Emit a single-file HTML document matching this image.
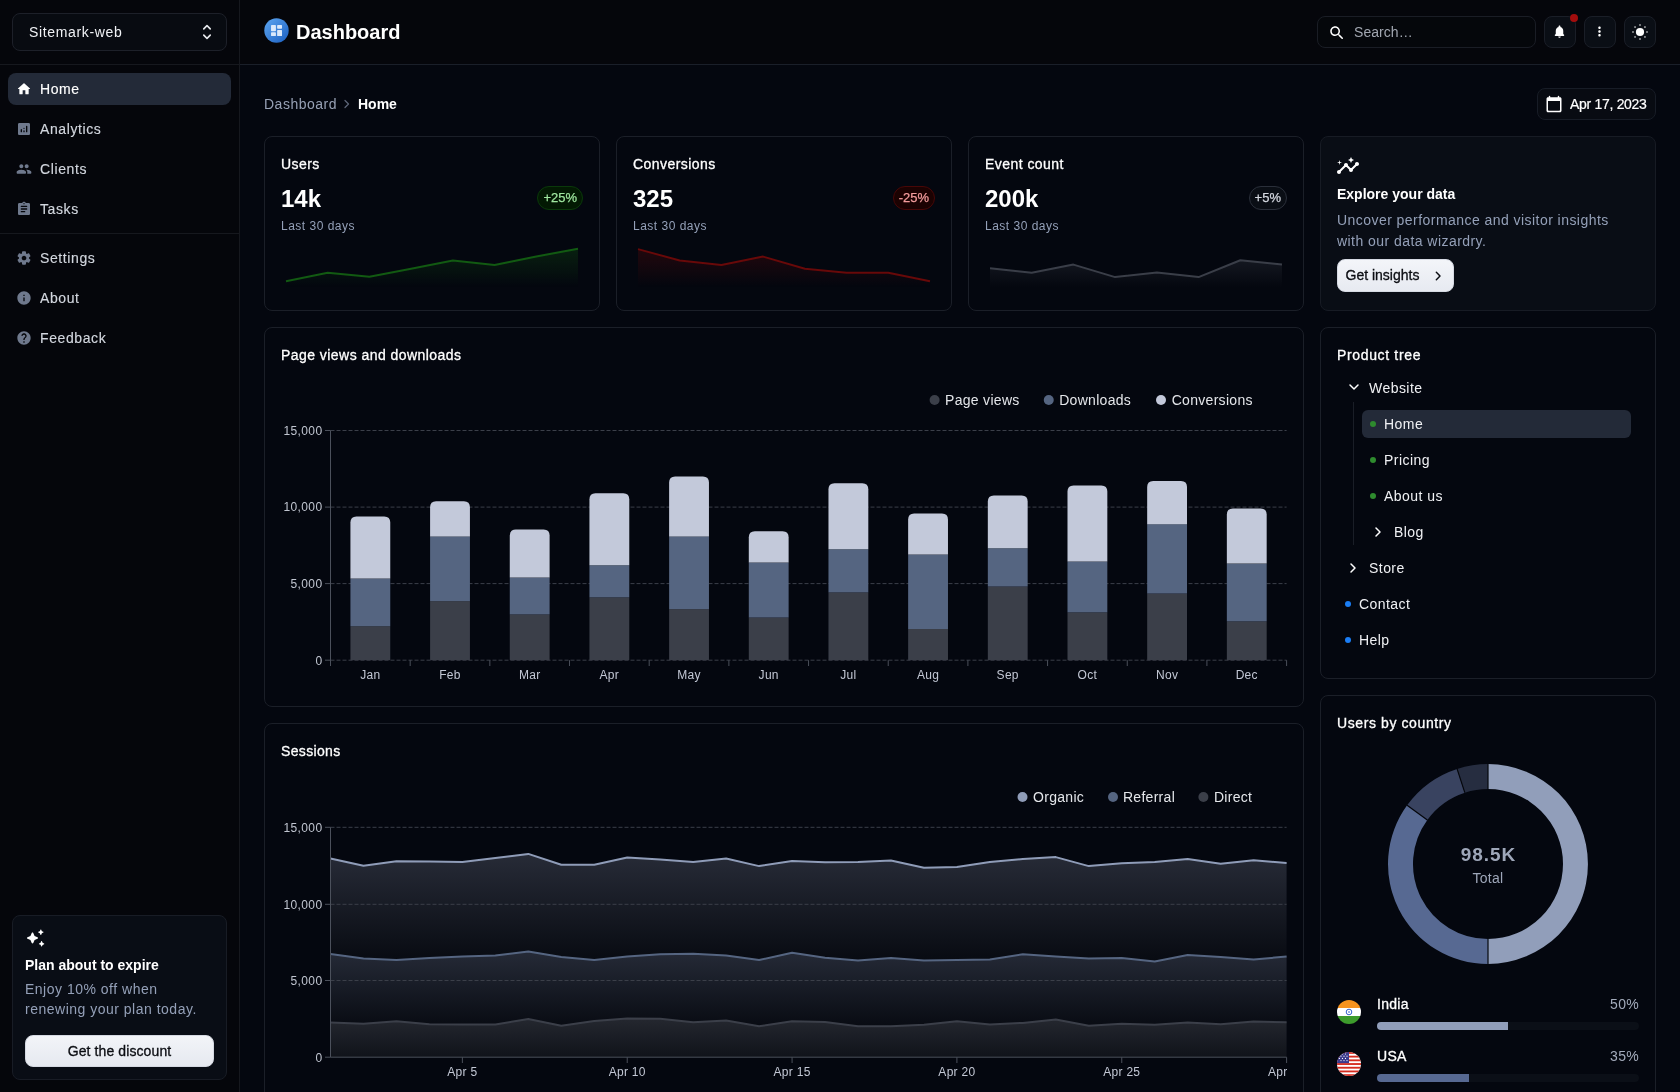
<!DOCTYPE html>
<html><head><meta charset="utf-8">
<style>
*{box-sizing:border-box;margin:0;padding:0}
html,body{width:1680px;height:1092px;overflow:hidden;background:#04070f;font-family:"Liberation Sans",sans-serif;color:#fff}
.abs{position:absolute}
#root{position:absolute;left:0;top:0;width:1680px;height:1092px;will-change:transform}
svg{display:block}
#side{position:absolute;left:0;top:0;width:240px;height:1092px;background:#05060b;border-right:1px solid #16181e}
#hdr{position:absolute;left:240px;top:0;width:1440px;height:65px;background:#05060b;border-bottom:1px solid #1a1f29}
#sideline{position:absolute;left:0;top:64px;width:239px;height:1px;background:#16181e}
.sel{position:absolute;left:12px;top:13px;width:215px;height:38px;border:1px solid #1d2029;border-radius:8px;background:#080b11}
.nav{position:absolute;left:8px;width:223px;height:32px;border-radius:8px}
.nav .ic{position:absolute;left:8px;top:8px;width:16px;height:16px;fill:#6f798d}
.nav .tx{position:absolute;left:32px;top:0;line-height:32px;font-size:14px;color:#d2d6de;letter-spacing:0.6px;-webkit-text-stroke:0.15px currentColor}
.nav.on{background:#232a38}
.nav.on .ic{fill:#fff}
.nav.on .tx{color:#fff}
.card{position:absolute;border:1px solid #1b1f28;border-radius:8px;background:#04070f}
.t14{font-size:14px;letter-spacing:0.3px}
.muted{color:#94a0b8}
.med{-webkit-text-stroke:0.3px currentColor}
.chip{position:absolute;right:16px;top:49px;height:24px;border:1px solid;border-radius:12px;font-size:13px;line-height:22px;padding:0 5px;letter-spacing:0px;-webkit-text-stroke:0.25px currentColor}
.chip.up{background:#031903;border-color:#0a390a;color:#9fe79f}
.chip.down{background:#1b0202;border-color:#480707;color:#f39c9c}
.chip.neu{background:#0a0e15;border-color:#2a2f3a;color:#d4d8e0}
.tdot{position:absolute;width:6px;height:6px;border-radius:50%}
.tdot.g{background:#2e8b2e}.tdot.b{background:#1b7ef5}
</style></head><body>
<div id="root"><div id="side">
  <div class="sel"><div class="abs t14" style="left:16px;top:0;line-height:37px;color:#f0f2f5;letter-spacing:0.65px">Sitemark-web</div>
    <svg class="abs" style="left:184px;top:8px" width="20" height="20" viewBox="0 0 24 24" fill="#e8eaee"><path d="M12 5.83 15.17 9c.39.39 1.02.39 1.41 0 .39-.39.39-1.02 0-1.41L12.7 3.7a.9959.9959 0 0 0-1.41 0L7.41 7.59c-.39.39-.39 1.02 0 1.41.39.39 1.02.39 1.41 0L12 5.83zm0 12.34L8.83 15a.9959.9959 0 0 0-1.41 0c-.39.39-.39 1.02 0 1.41l3.88 3.89c.39.39 1.02.39 1.41 0l3.88-3.88c.39-.39.39-1.02 0-1.41a.9959.9959 0 0 0-1.41 0L12 18.17z"/></svg>
  </div>
  <div class="nav on" style="top:73px"><svg class="ic" viewBox="0 0 24 24"><path d="M10 19v-5h4v5c0 .55.45 1 1 1h3c.55 0 1-.45 1-1v-7h1.7c.46 0 .68-.57.33-.87L12.67 3.6c-.38-.34-.96-.34-1.34 0l-8.36 7.53c-.34.3-.13.87.33.87H5v7c0 .55.45 1 1 1h3c.55 0 1-.45 1-1z"/></svg><div class="tx">Home</div></div>
  <div class="nav" style="top:113px"><svg class="ic" viewBox="0 0 24 24"><path d="M19 3H5c-1.1 0-2 .9-2 2v14c0 1.1.9 2 2 2h14c1.1 0 2-.9 2-2V5c0-1.1-.9-2-2-2zM8 17c-.55 0-1-.45-1-1v-3c0-.55.45-1 1-1s1 .45 1 1v3c0 .55-.45 1-1 1zm4 0c-.55 0-1-.45-1-1v-1c0-.55.45-1 1-1s1 .45 1 1v1c0 .55-.45 1-1 1zm0-5c-.55 0-1-.45-1-1s.45-1 1-1 1 .45 1 1-.45 1-1 1zm4 5c-.55 0-1-.45-1-1V8c0-.55.45-1 1-1s1 .45 1 1v8c0 .55-.45 1-1 1z"/></svg><div class="tx">Analytics</div></div>
  <div class="nav" style="top:153px"><svg class="ic" viewBox="0 0 24 24"><path d="M16 11c1.66 0 2.99-1.34 2.99-3S17.66 5 16 5s-3 1.34-3 3 1.34 3 3 3zm-8 0c1.66 0 2.99-1.34 2.99-3S9.66 5 8 5 5 6.34 5 8s1.34 3 3 3zm0 2c-2.33 0-7 1.17-7 3.5V18c0 .55.45 1 1 1h12c.55 0 1-.45 1-1v-1.5c0-2.33-4.67-3.5-7-3.5zm8 0c-.29 0-.62.02-.97.05.02.01.03.03.04.04 1.14.83 1.93 1.94 1.93 3.41V18c0 .35-.07.69-.18 1H22c.55 0 1-.45 1-1v-1.5c0-2.33-4.67-3.5-7-3.5z"/></svg><div class="tx">Clients</div></div>
  <div class="nav" style="top:193px"><svg class="ic" viewBox="0 0 24 24"><path d="M19 3h-4.18C14.4 1.84 13.3 1 12 1s-2.4.84-2.82 2H5c-1.1 0-2 .9-2 2v14c0 1.1.9 2 2 2h14c1.1 0 2-.9 2-2V5c0-1.1-.9-2-2-2zm-7 0c.55 0 1 .45 1 1s-.45 1-1 1-1-.45-1-1 .45-1 1-1zm1 14H8c-.55 0-1-.45-1-1s.45-1 1-1h5c.55 0 1 .45 1 1s-.45 1-1 1zm3-4H8c-.55 0-1-.45-1-1s.45-1 1-1h8c.55 0 1 .45 1 1s-.45 1-1 1zm0-4H8c-.55 0-1-.45-1-1s.45-1 1-1h8c.55 0 1 .45 1 1s-.45 1-1 1z"/></svg><div class="tx">Tasks</div></div>
  <div class="abs" style="left:0;top:233px;width:239px;height:1px;background:#16181e"></div>
  <div class="nav" style="top:242px"><svg class="ic" viewBox="0 0 24 24"><path d="M19.5 12c0-.23-.01-.45-.03-.68l1.86-1.41c.4-.3.51-.86.26-1.3l-1.87-3.23c-.25-.44-.79-.62-1.25-.42l-2.15.91c-.37-.26-.76-.49-1.170-.68l-.29-2.31c-.06-.5-.49-.88-.99-.88h-3.73c-.51 0-.94.38-1 .88l-.29 2.31c-.41.19-.8.42-1.17.68l-2.15-.91c-.46-.2-1-.02-1.25.42L2.41 8.62c-.25.44-.14.99.26 1.3l1.86 1.41c-.02.22-.03.44-.03.67s.01.45.03.68l-1.86 1.41c-.4.3-.51.86-.26 1.3l1.87 3.23c.25.44.79.62 1.25.42l2.15-.91c.37.26.76.49 1.17.68l.29 2.31c.06.5.49.88.99.88h3.73c.5 0 .93-.38.99-.88l.29-2.31c.41-.19.8-.42 1.17-.68l2.15.91c.46.2 1 .02 1.25-.42l1.87-3.23c.25-.44.14-.99-.26-1.3l-1.86-1.41c.03-.23.04-.45.04-.68zm-7.46 3.5c-1.93 0-3.5-1.57-3.5-3.5s1.570-3.5 3.5-3.5 3.5 1.57 3.5 3.5-1.57 3.5-3.5 3.5z"/></svg><div class="tx">Settings</div></div>
  <div class="nav" style="top:282px"><svg class="ic" viewBox="0 0 24 24"><path d="M12 2C6.48 2 2 6.48 2 12s4.48 10 10 10 10-4.48 10-10S17.52 2 12 2zm0 15c-.55 0-1-.45-1-1v-4c0-.55.45-1 1-1s1 .45 1 1v4c0 .55-.45 1-1 1zm1-8h-2V7h2v2z"/></svg><div class="tx">About</div></div>
  <div class="nav" style="top:322px"><svg class="ic" viewBox="0 0 24 24"><path d="M12 2C6.48 2 2 6.48 2 12s4.48 10 10 10 10-4.48 10-10S17.52 2 12 2zm1 17h-2v-2h2v2zm2.07-7.75-.9.92c-.5.51-.86.97-1.04 1.69-.08.32-.13.68-.13 1.14h-2v-.5c0-.46.08-.9.22-1.31.2-.58.53-1.1.95-1.52l1.24-1.26c.46-.44.68-1.1.55-1.8-.13-.72-.69-1.33-1.39-1.53-1.110-.31-2.14.32-2.47 1.27-.12.37-.43.65-.82.65h-.3C8.4 9 8 8.44 8.16 7.88c.43-1.47 1.68-2.59 3.23-2.83 1.52-.24 2.97.55 3.87 1.8 1.18 1.63.83 3.38-.19 4.4z"/></svg><div class="tx">Feedback</div></div>
  <div class="abs" style="left:12px;top:915px;width:215px;height:165px;border:1px solid #181c25;border-radius:8px;background:#090d15">
    <svg class="abs" style="left:12px;top:12px" width="20" height="20" viewBox="0 0 24 24" fill="#fff"><path d="M19.46 8l.79-1.75L22 5.46c.39-.18.39-.73 0-.91l-1.75-.79L19.46 2c-.18-.39-.73-.39-.91 0l-.79 1.750-1.76.79c-.39.18-.39.73 0 .91l1.75.79.79 1.76c.18.39.74.39.92 0zM11.5 9.5 9.910 6c-.35-.78-1.47-.78-1.82 0L6.5 9.5 3 11.09c-.78.36-.78 1.47 0 1.82l3.5 1.59L8.09 18c.36.78 1.47.78 1.82 0l1.59-3.5 3.5-1.59c.78-.36.78-1.47 0-1.82L11.5 9.5zm7.95 6.5-.79 1.75-1.76.79c-.39.18-.39.73 0 .91l1.75.79.79 1.76c.18.39.73.39.91 0l.79-1.75 1.76-.79c.39-.18.39-.73 0-.91l-1.75-.79-.79-1.76c-.18-.39-.74-.39-.92 0z"/></svg>
    <div class="abs" style="left:12px;top:39px;font-size:14px;font-weight:700;line-height:20px">Plan about to expire</div>
    <div class="abs t14 muted" style="left:12px;top:63px;line-height:20px;width:200px;letter-spacing:0.5px">Enjoy 10% off when<br>renewing your plan today.</div>
    <div class="abs" style="left:12px;top:119px;width:189px;height:32px;border-radius:8px;background:linear-gradient(#f2f4f8,#e6e9f0);border:1px solid #d5d9e2;color:#0b0d12;font-size:14px;line-height:30px;text-align:center;letter-spacing:0.1px;-webkit-text-stroke:0.3px #0b0d12">Get the discount</div>
  </div>
</div>
<div id="sideline"></div>
<div id="hdr">
  <svg class="abs" style="left:24px;top:18px" width="25" height="25" viewBox="0 0 25 25">
    <defs><linearGradient id="lg" x1="0" y1="0" x2="1" y2="1"><stop offset="0" stop-color="#5ea7f2"/><stop offset="1" stop-color="#1a5ec0"/></linearGradient></defs>
    <circle cx="12.5" cy="12.5" r="12.2" fill="url(#lg)"/>
    <g fill="#dbe9fb" transform="translate(5.2,5.2) scale(0.61)"><path d="M4 13h6c.55 0 1-.45 1-1V4c0-.55-.45-1-1-1H4c-.55 0-1 .45-1 1v8c0 .55.45 1 1 1zm0 8h6c.55 0 1-.45 1-1v-4c0-.55-.45-1-1-1H4c-.55 0-1 .45-1 1v4c0 .55.45 1 1 1zm10 0h6c.55 0 1-.45 1-1v-8c0-.55-.45-1-1-1h-6c-.55 0-1 .45-1 1v8c0 .55.45 1 1 1zM13 4v4c0 .55.45 1 1 1h6c.55 0 1-.45 1-1V4c0-.55-.45-1-1-1h-6c-.55 0-1 .45-1 1z"/></g>
  </svg>
  <div class="abs" style="left:56px;top:19px;font-size:20px;font-weight:700;line-height:26px;color:#fff">Dashboard</div>
  <div class="abs" style="left:1077px;top:16px;width:219px;height:32px;border:1px solid #1a1d25;border-radius:8px;background:#05070b">
    <svg class="abs" style="left:10px;top:7px" width="18" height="18" viewBox="0 0 24 24" fill="#fff"><path d="M15.5 14h-.79l-.28-.27C15.41 12.59 16 11.11 16 9.5 16 5.910 13.09 3 9.5 3S3 5.91 3 9.5 5.91 16 9.5 16c1.61 0 3.09-.59 4.23-1.57l.27.28v.79l4.25 4.25c.41.41 1.08.41 1.49 0 .41-.41.41-1.08 0-1.49L15.5 14zm-6 0C7.01 14 5 11.99 5 9.5S7.01 5 9.5 5 14 7.01 14 9.5 11.99 14 9.5 14z"/></svg>
    <div class="abs t14" style="left:36px;top:0;line-height:30px;color:#a2a7b1;letter-spacing:0.05px">Search…</div>
  </div>
  <div class="abs" style="left:1304px;top:16px;width:32px;height:32px;border:1px solid #1a1e27;border-radius:8px;background:#0a0e15">
    <svg class="abs" style="left:7px;top:7px" width="15" height="15" viewBox="0 0 24 24" fill="#fff"><path d="M12 22c1.1 0 2-.9 2-2h-4c0 1.1.89 2 2 2zm6-6v-5c0-3.07-1.64-5.64-4.5-6.32V4c0-.83-.67-1.5-1.5-1.5s-1.5.67-1.5 1.5v.68C7.63 5.36 6 7.92 6 11v5l-1.29 1.29c-.63.63-.19 1.71.7 1.71h13.17c.89 0 1.34-1.08.71-1.71L18 16z"/></svg>
    <div class="abs" style="left:25px;top:-3px;width:8px;height:8px;border-radius:50%;background:#a30d0d"></div>
  </div>
  <div class="abs" style="left:1344px;top:16px;width:32px;height:32px;border:1px solid #1a1e27;border-radius:8px;background:#0a0e15">
    <svg class="abs" style="left:7px;top:7px" width="15" height="15" viewBox="0 0 24 24" fill="#fff"><path d="M12 8c1.1 0 2-.9 2-2s-.9-2-2-2-2 .9-2 2 .9 2 2 2zm0 2c-1.1 0-2 .9-2 2s.9 2 2 2 2-.9 2-2-.9-2-2-2zm0 6c-1.1 0-2 .9-2 2s.9 2 2 2 2-.9 2-2-.9-2-2-2z"/></svg>
  </div>
  <div class="abs" style="left:1384px;top:16px;width:32px;height:32px;border:1px solid #1a1e27;border-radius:8px;background:#0a0e15">
    <svg class="abs" style="left:7px;top:6.5px" width="16" height="16" viewBox="0 0 16 16" fill="#fff"><circle cx="8" cy="8" r="4.1"/><rect x="7.35" y="0.35" width="1.3" height="1.3"/><rect x="12.30" y="2.40" width="1.3" height="1.3"/><rect x="14.35" y="7.35" width="1.3" height="1.3"/><rect x="12.30" y="12.30" width="1.3" height="1.3"/><rect x="7.35" y="14.35" width="1.3" height="1.3"/><rect x="2.40" y="12.30" width="1.3" height="1.3"/><rect x="0.35" y="7.35" width="1.3" height="1.3"/><rect x="2.40" y="2.40" width="1.3" height="1.3"/></svg>
  </div>
</div>
<div class="abs t14" style="left:264px;top:94px;line-height:20px;color:#97a1b5;letter-spacing:0.5px">Dashboard</div>
<svg class="abs" style="left:341px;top:96px" width="12" height="16" viewBox="0 0 12 16"><path d="M4 4.5 7.5 8 4 11.5" fill="none" stroke="#5d6577" stroke-width="1.3" stroke-linecap="round" stroke-linejoin="round"/></svg>
<div class="abs" style="left:358px;top:94px;font-size:14px;font-weight:700;line-height:20px;color:#fff">Home</div>
<div class="abs" style="left:1537px;top:88px;width:119px;height:32px;border:1px solid #171c26;border-radius:8px;background:#080b12">
  <svg class="abs" style="left:7px;top:6px" width="18" height="18" viewBox="0 0 24 24" fill="#fff"><path d="M20 3h-1V2c0-.55-.45-1-1-1s-1 .45-1 1v1H7V2c0-.55-.45-1-1-1s-1 .45-1 1v1H4c-1.1 0-2 .9-2 2v16c0 1.1.9 2 2 2h16c1.1 0 2-.9 2-2V5c0-1.1-.9-2-2-2zm-1 18H5c-.55 0-1-.45-1-1V8h16v12c0 .55-.45 1-1 1z"/></svg>
  <div class="abs" style="left:32px;top:0;line-height:30px;font-size:14px;color:#fff;letter-spacing:-0.3px;-webkit-text-stroke:0.2px #fff">Apr 17, 2023</div>
</div>
<div class="card" style="left:264px;top:136px;width:336px;height:175px">
  <div class="abs med" style="left:16px;top:17px;font-size:14px;line-height:20px;color:#fff;letter-spacing:0.45px">Users</div>
  <div class="abs" style="left:16px;top:47px;font-size:24px;font-weight:700;line-height:30px;color:#fff">14k</div>
  <div class="abs muted" style="left:16px;top:81px;font-size:12px;line-height:16px;letter-spacing:0.5px">Last 30 days</div>
  <div class="chip up">+25%</div>
  <svg class="abs" style="left:0;top:0" width="334" height="173"><defs><linearGradient id="g1" x1="0" y1="0" x2="0" y2="1"><stop offset="0" stop-color="#125a12" stop-opacity="0.3"/><stop offset="1" stop-color="#125a12" stop-opacity="0"/></linearGradient></defs>
  <path d="M21.0,144.2 L21.0,144.2 L62.7,135.7 L104.4,139.8 L146.1,131.8 L187.9,123.5 L229.6,128.1 L271.3,119.6 L313.0,111.8 L313.0,150 L21.0,150 Z" fill="url(#g1)"/><polyline points="21.0,144.2 62.7,135.7 104.4,139.8 146.1,131.8 187.9,123.5 229.6,128.1 271.3,119.6 313.0,111.8" fill="none" stroke="#125a12" stroke-width="2" stroke-linejoin="round"/></svg>
</div>
<div class="card" style="left:616px;top:136px;width:336px;height:175px">
  <div class="abs med" style="left:16px;top:17px;font-size:14px;line-height:20px;color:#fff;letter-spacing:0.45px">Conversions</div>
  <div class="abs" style="left:16px;top:47px;font-size:24px;font-weight:700;line-height:30px;color:#fff">325</div>
  <div class="abs muted" style="left:16px;top:81px;font-size:12px;line-height:16px;letter-spacing:0.5px">Last 30 days</div>
  <div class="chip down">-25%</div>
  <svg class="abs" style="left:0;top:0" width="334" height="173"><defs><linearGradient id="g2" x1="0" y1="0" x2="0" y2="1"><stop offset="0" stop-color="#680909" stop-opacity="0.3"/><stop offset="1" stop-color="#680909" stop-opacity="0"/></linearGradient></defs>
  <path d="M21.0,112.1 L21.0,112.1 L62.7,123.5 L104.4,127.9 L146.1,119.6 L187.9,131.8 L229.6,135.7 L271.3,135.7 L313.0,144.2 L313.0,150 L21.0,150 Z" fill="url(#g2)"/><polyline points="21.0,112.1 62.7,123.5 104.4,127.9 146.1,119.6 187.9,131.8 229.6,135.7 271.3,135.7 313.0,144.2" fill="none" stroke="#680909" stroke-width="2" stroke-linejoin="round"/></svg>
</div>
<div class="card" style="left:968px;top:136px;width:336px;height:175px">
  <div class="abs med" style="left:16px;top:17px;font-size:14px;line-height:20px;color:#fff;letter-spacing:0.45px">Event count</div>
  <div class="abs" style="left:16px;top:47px;font-size:24px;font-weight:700;line-height:30px;color:#fff">200k</div>
  <div class="abs muted" style="left:16px;top:81px;font-size:12px;line-height:16px;letter-spacing:0.5px">Last 30 days</div>
  <div class="chip neu">+5%</div>
  <svg class="abs" style="left:0;top:0" width="334" height="173"><defs><linearGradient id="g3" x1="0" y1="0" x2="0" y2="1"><stop offset="0" stop-color="#3a3e48" stop-opacity="0.3"/><stop offset="1" stop-color="#3a3e48" stop-opacity="0"/></linearGradient></defs>
  <path d="M21.0,131.3 L21.0,131.3 L62.7,135.8 L104.4,127.6 L146.1,140.1 L187.9,135.6 L229.6,140.1 L271.3,123.3 L313.0,127.6 L313.0,150 L21.0,150 Z" fill="url(#g3)"/><polyline points="21.0,131.3 62.7,135.8 104.4,127.6 146.1,140.1 187.9,135.6 229.6,140.1 271.3,123.3 313.0,127.6" fill="none" stroke="#3a3e48" stroke-width="2" stroke-linejoin="round"/></svg>
</div>
<div class="card" style="left:1320px;top:136px;width:336px;height:175px;background:#090d15;border-color:#171b24">
  <svg class="abs" style="left:16px;top:19px" width="22" height="18" viewBox="1 2 22 18" fill="#fff"><path d="M21 8c-1.45 0-2.26 1.44-1.93 2.51l-3.55 3.56c-.3-.09-.74-.09-1.04 0l-2.55-2.55C12.27 10.45 11.46 9 10 9c-1.45 0-2.27 1.44-1.930 2.52l-4.56 4.55C2.44 15.74 1 16.550 1 18c0 1.1.9 2 2 2 1.45 0 2.26-1.44 1.93-2.51l4.55-4.56c.3.09.74.09 1.04 0l2.55 2.55C12.73 16.55 13.54 18 15 18c1.45 0 2.27-1.44 1.93-2.52l3.56-3.55c1.07.33 2.51-.48 2.51-1.93 0-1.1-.9-2-2-2z"/><path d="m15 9 .94-2.07L18 6l-2.06-.93L15 3l-.92 2.07L12 6l2.08.93zM3.5 11 4 9l2-.5L4 8l-.5-2L3 8l-2 .5L3 9z"/></svg>
  <div class="abs" style="left:16px;top:47px;font-size:14px;font-weight:700;line-height:20px">Explore your data</div>
  <div class="abs t14 muted" style="left:16px;top:73px;line-height:21px;width:310px;letter-spacing:0.45px">Uncover performance and visitor insights<br>with our data wizardry.</div>
  <div class="abs" style="left:16px;top:122px;width:117px;height:33px;border-radius:8px;background:linear-gradient(#f3f5f9,#e7eaf1);border:1px solid #d6dae3;color:#0b0d12;font-size:14px;line-height:31px;letter-spacing:0px;-webkit-text-stroke:0.3px #0b0d12">
    <span class="abs" style="left:7.5px;top:0">Get insights</span>
    <svg class="abs" style="left:92px;top:8px" width="16" height="16" viewBox="0 0 24 24"><path d="M9.5 6.5 15 12l-5.5 5.5" fill="none" stroke="#0b0d12" stroke-width="2.2" stroke-linecap="round" stroke-linejoin="round"/></svg>
  </div>
</div>
<div class="card" style="left:264px;top:327px;width:1040px;height:380px">
  <div class="abs t14 med" style="left:16px;top:17px;line-height:20px;color:#fff;letter-spacing:0.45px">Page views and downloads</div>
</div>
<div class="card" style="left:264px;top:723px;width:1040px;height:400px">
  <div class="abs t14 med" style="left:16px;top:17px;line-height:20px;color:#fff;letter-spacing:0.35px">Sessions</div>
</div>
<div class="card" style="left:1320px;top:327px;width:336px;height:352px">
  <div class="abs t14 med" style="left:16px;top:17px;line-height:20px;color:#fff;letter-spacing:0.65px">Product tree</div>
  <svg class="abs" style="left:25px;top:51px" width="16" height="16" viewBox="0 0 16 16"><path d="M4 6 8 10 12 6" fill="none" stroke="#fff" stroke-width="1.5" stroke-linecap="round" stroke-linejoin="round"/></svg>
  <div class="abs t14" style="left:48px;top:50px;line-height:20px;color:#f0f1f4;letter-spacing:0.45px">Website</div>
  <div class="abs" style="left:32px;top:74px;width:1px;height:143px;background:#1a1e27"></div>
  <div class="abs" style="left:41px;top:82px;width:269px;height:28px;border-radius:6px;background:#232a38"></div>
  <div class="tdot g" style="left:49px;top:93px"></div><div class="abs t14" style="left:63px;top:86px;line-height:20px;color:#f0f1f4;letter-spacing:0.45px">Home</div>
  <div class="tdot g" style="left:49px;top:129px"></div><div class="abs t14" style="left:63px;top:122px;line-height:20px;color:#f0f1f4;letter-spacing:0.45px">Pricing</div>
  <div class="tdot g" style="left:49px;top:165px"></div><div class="abs t14" style="left:63px;top:158px;line-height:20px;color:#f0f1f4;letter-spacing:0.45px">About us</div>
  <svg class="abs" style="left:49px;top:196px" width="16" height="16" viewBox="0 0 16 16"><path d="M6 4 10 8 6 12" fill="none" stroke="#fff" stroke-width="1.5" stroke-linecap="round" stroke-linejoin="round"/></svg>
  <div class="abs t14" style="left:73px;top:194px;line-height:20px;color:#f0f1f4;letter-spacing:0.45px">Blog</div>
  <svg class="abs" style="left:24px;top:232px" width="16" height="16" viewBox="0 0 16 16"><path d="M6 4 10 8 6 12" fill="none" stroke="#fff" stroke-width="1.5" stroke-linecap="round" stroke-linejoin="round"/></svg>
  <div class="abs t14" style="left:48px;top:230px;line-height:20px;color:#f0f1f4;letter-spacing:0.45px">Store</div>
  <div class="tdot b" style="left:24px;top:273px"></div><div class="abs t14" style="left:38px;top:266px;line-height:20px;color:#f0f1f4;letter-spacing:0.45px">Contact</div>
  <div class="tdot b" style="left:24px;top:309px"></div><div class="abs t14" style="left:38px;top:302px;line-height:20px;color:#f0f1f4;letter-spacing:0.45px">Help</div>
</div>
<div class="card" style="left:1320px;top:695px;width:336px;height:420px">
  <div class="abs t14 med" style="left:16px;top:17px;line-height:20px;color:#fff;letter-spacing:0.6px">Users by country</div>
  <svg class="abs" style="left:16px;top:304px" width="24" height="24" viewBox="0 0 24 24"><defs><clipPath id="cin"><circle cx="12" cy="12" r="12"/></clipPath></defs><g clip-path="url(#cin)"><rect width="24" height="8" fill="#f7931e"/><rect y="8" width="24" height="8" fill="#fff"/><rect y="16" width="24" height="8" fill="#3d9b2c"/><circle cx="12" cy="12" r="2.8" fill="none" stroke="#1d4ec4" stroke-width="0.9"/><circle cx="12" cy="12" r="0.8" fill="#1d4ec4"/></g></svg>
  <div class="abs t14 med" style="left:56px;top:298px;line-height:20px;color:#fff">India</div>
  <div class="abs t14 muted" style="right:16px;top:298px;line-height:20px;color:#a3abbb">50%</div>
  <div class="abs" style="left:56px;top:326px;width:262px;height:8px;border-radius:4px;background:#0b0f17;overflow:hidden"><div style="width:50%;height:8px;background:#919eba"></div></div>
  <svg class="abs" style="left:16px;top:356px" width="24" height="24" viewBox="0 0 24 24"><defs><clipPath id="cus"><circle cx="12" cy="12" r="12"/></clipPath></defs><g clip-path="url(#cus)"><rect width="24" height="24" fill="#fff"/><g fill="#d52b1e"><rect y="0" width="24" height="1.85"/><rect y="3.7" width="24" height="1.85"/><rect y="7.4" width="24" height="1.85"/><rect y="11.1" width="24" height="1.85"/><rect y="14.8" width="24" height="1.85"/><rect y="18.5" width="24" height="1.85"/><rect y="22.2" width="24" height="1.85"/></g><rect width="12" height="11.1" fill="#3c3b8e"/><g fill="#fff"><circle cx="2.5" cy="2" r=".6"/><circle cx="5.5" cy="2" r=".6"/><circle cx="8.5" cy="2" r=".6"/><circle cx="4" cy="4.2" r=".6"/><circle cx="7" cy="4.2" r=".6"/><circle cx="10" cy="4.2" r=".6"/><circle cx="2.5" cy="6.4" r=".6"/><circle cx="5.5" cy="6.4" r=".6"/><circle cx="8.5" cy="6.4" r=".6"/><circle cx="4" cy="8.6" r=".6"/><circle cx="7" cy="8.6" r=".6"/><circle cx="10" cy="8.6" r=".6"/></g></g></svg>
  <div class="abs t14 med" style="left:56px;top:350px;line-height:20px;color:#fff">USA</div>
  <div class="abs t14 muted" style="right:16px;top:350px;line-height:20px;color:#a3abbb">35%</div>
  <div class="abs" style="left:56px;top:378px;width:262px;height:8px;border-radius:4px;background:#0b0f17;overflow:hidden"><div style="width:35%;height:8px;background:#576992"></div></div>
</div>
<svg class="abs" style="left:0;top:0;pointer-events:none" width="1680" height="1092"><line x1="330.5" y1="430.5" x2="1286.6" y2="430.5" stroke="#3b3f49" stroke-dasharray="4 2"/><line x1="325" y1="430.5" x2="330.5" y2="430.5" stroke="#4b505b"/><text x="322.5" y="434.8" text-anchor="end" font-size="12" letter-spacing="0.4" fill="#c0c5d0" font-family="Liberation Sans, sans-serif">15,000</text><line x1="330.5" y1="507.1" x2="1286.6" y2="507.1" stroke="#3b3f49" stroke-dasharray="4 2"/><line x1="325" y1="507.1" x2="330.5" y2="507.1" stroke="#4b505b"/><text x="322.5" y="511.40000000000003" text-anchor="end" font-size="12" letter-spacing="0.4" fill="#c0c5d0" font-family="Liberation Sans, sans-serif">10,000</text><line x1="330.5" y1="583.6" x2="1286.6" y2="583.6" stroke="#3b3f49" stroke-dasharray="4 2"/><line x1="325" y1="583.6" x2="330.5" y2="583.6" stroke="#4b505b"/><text x="322.5" y="587.9" text-anchor="end" font-size="12" letter-spacing="0.4" fill="#c0c5d0" font-family="Liberation Sans, sans-serif">5,000</text><line x1="330.5" y1="660.2" x2="1286.6" y2="660.2" stroke="#3b3f49" stroke-dasharray="4 2"/><line x1="325" y1="660.2" x2="330.5" y2="660.2" stroke="#4b505b"/><text x="322.5" y="664.5" text-anchor="end" font-size="12" letter-spacing="0.4" fill="#c0c5d0" font-family="Liberation Sans, sans-serif">0</text><line x1="330.5" y1="430.5" x2="330.5" y2="666" stroke="#4b505b"/><rect x="350.42" y="626.20" width="39.84" height="34.00" fill="#3b3f49"/><rect x="350.42" y="578.50" width="39.84" height="47.70" fill="#556581"/><path d="M350.42,578.50 V522.60 Q350.42,516.60 356.42,516.60 H384.26 Q390.26,516.60 390.26,522.60 V578.50 Z" fill="#c3c9da"/><text x="370.34" y="679" text-anchor="middle" font-size="12" letter-spacing="0.3" fill="#c3c8d5" font-family="Liberation Sans, sans-serif">Jan</text><rect x="430.09" y="601.10" width="39.84" height="59.10" fill="#3b3f49"/><rect x="430.09" y="536.40" width="39.84" height="64.70" fill="#556581"/><path d="M430.09,536.40 V507.30 Q430.09,501.30 436.09,501.30 H463.93 Q469.93,501.30 469.93,507.30 V536.40 Z" fill="#c3c9da"/><text x="450.01" y="679" text-anchor="middle" font-size="12" letter-spacing="0.3" fill="#c3c8d5" font-family="Liberation Sans, sans-serif">Feb</text><rect x="509.77" y="614.40" width="39.84" height="45.80" fill="#3b3f49"/><rect x="509.77" y="577.50" width="39.84" height="36.90" fill="#556581"/><path d="M509.77,577.50 V535.50 Q509.77,529.50 515.77,529.50 H543.61 Q549.61,529.50 549.61,535.50 V577.50 Z" fill="#c3c9da"/><text x="529.69" y="679" text-anchor="middle" font-size="12" letter-spacing="0.3" fill="#c3c8d5" font-family="Liberation Sans, sans-serif">Mar</text><rect x="589.44" y="597.30" width="39.84" height="62.90" fill="#3b3f49"/><rect x="589.44" y="565.30" width="39.84" height="32.00" fill="#556581"/><path d="M589.44,565.30 V499.30 Q589.44,493.30 595.44,493.30 H623.28 Q629.28,493.30 629.28,499.30 V565.30 Z" fill="#c3c9da"/><text x="609.36" y="679" text-anchor="middle" font-size="12" letter-spacing="0.3" fill="#c3c8d5" font-family="Liberation Sans, sans-serif">Apr</text><rect x="669.12" y="609.10" width="39.84" height="51.10" fill="#3b3f49"/><rect x="669.12" y="536.40" width="39.84" height="72.70" fill="#556581"/><path d="M669.12,536.40 V482.60 Q669.12,476.60 675.12,476.60 H702.96 Q708.96,476.60 708.96,482.60 V536.40 Z" fill="#c3c9da"/><text x="689.04" y="679" text-anchor="middle" font-size="12" letter-spacing="0.3" fill="#c3c8d5" font-family="Liberation Sans, sans-serif">May</text><rect x="748.79" y="617.50" width="39.84" height="42.70" fill="#3b3f49"/><rect x="748.79" y="562.50" width="39.84" height="55.00" fill="#556581"/><path d="M748.79,562.50 V537.20 Q748.79,531.20 754.79,531.20 H782.63 Q788.63,531.20 788.63,537.20 V562.50 Z" fill="#c3c9da"/><text x="768.71" y="679" text-anchor="middle" font-size="12" letter-spacing="0.3" fill="#c3c8d5" font-family="Liberation Sans, sans-serif">Jun</text><rect x="828.47" y="592.40" width="39.84" height="67.80" fill="#3b3f49"/><rect x="828.47" y="549.30" width="39.84" height="43.10" fill="#556581"/><path d="M828.47,549.30 V489.20 Q828.47,483.20 834.47,483.20 H862.31 Q868.31,483.20 868.31,489.20 V549.30 Z" fill="#c3c9da"/><text x="848.39" y="679" text-anchor="middle" font-size="12" letter-spacing="0.3" fill="#c3c8d5" font-family="Liberation Sans, sans-serif">Jul</text><rect x="908.14" y="629.00" width="39.84" height="31.20" fill="#3b3f49"/><rect x="908.14" y="554.50" width="39.84" height="74.50" fill="#556581"/><path d="M908.14,554.50 V519.50 Q908.14,513.50 914.14,513.50 H941.98 Q947.98,513.50 947.98,519.50 V554.50 Z" fill="#c3c9da"/><text x="928.06" y="679" text-anchor="middle" font-size="12" letter-spacing="0.3" fill="#c3c8d5" font-family="Liberation Sans, sans-serif">Aug</text><rect x="987.82" y="586.50" width="39.84" height="73.70" fill="#3b3f49"/><rect x="987.82" y="548.30" width="39.84" height="38.20" fill="#556581"/><path d="M987.82,548.30 V501.40 Q987.82,495.40 993.82,495.40 H1021.66 Q1027.66,495.40 1027.66,501.40 V548.30 Z" fill="#c3c9da"/><text x="1007.74" y="679" text-anchor="middle" font-size="12" letter-spacing="0.3" fill="#c3c8d5" font-family="Liberation Sans, sans-serif">Sep</text><rect x="1067.49" y="612.30" width="39.84" height="47.90" fill="#3b3f49"/><rect x="1067.49" y="561.50" width="39.84" height="50.80" fill="#556581"/><path d="M1067.49,561.50 V491.60 Q1067.49,485.60 1073.49,485.60 H1101.33 Q1107.33,485.60 1107.33,491.60 V561.50 Z" fill="#c3c9da"/><text x="1087.41" y="679" text-anchor="middle" font-size="12" letter-spacing="0.3" fill="#c3c8d5" font-family="Liberation Sans, sans-serif">Oct</text><rect x="1147.17" y="593.50" width="39.84" height="66.70" fill="#3b3f49"/><rect x="1147.17" y="524.20" width="39.84" height="69.30" fill="#556581"/><path d="M1147.17,524.20 V487.10 Q1147.17,481.10 1153.17,481.10 H1181.01 Q1187.01,481.10 1187.01,487.10 V524.20 Z" fill="#c3c9da"/><text x="1167.09" y="679" text-anchor="middle" font-size="12" letter-spacing="0.3" fill="#c3c8d5" font-family="Liberation Sans, sans-serif">Nov</text><rect x="1226.84" y="621.30" width="39.84" height="38.90" fill="#3b3f49"/><rect x="1226.84" y="563.60" width="39.84" height="57.70" fill="#556581"/><path d="M1226.84,563.60 V514.60 Q1226.84,508.60 1232.84,508.60 H1260.68 Q1266.68,508.60 1266.68,514.60 V563.60 Z" fill="#c3c9da"/><text x="1246.76" y="679" text-anchor="middle" font-size="12" letter-spacing="0.3" fill="#c3c8d5" font-family="Liberation Sans, sans-serif">Dec</text><line x1="330.50" y1="660.2" x2="330.50" y2="666" stroke="#4b505b"/><line x1="410.18" y1="660.2" x2="410.18" y2="666" stroke="#4b505b"/><line x1="489.85" y1="660.2" x2="489.85" y2="666" stroke="#4b505b"/><line x1="569.52" y1="660.2" x2="569.52" y2="666" stroke="#4b505b"/><line x1="649.20" y1="660.2" x2="649.20" y2="666" stroke="#4b505b"/><line x1="728.88" y1="660.2" x2="728.88" y2="666" stroke="#4b505b"/><line x1="808.55" y1="660.2" x2="808.55" y2="666" stroke="#4b505b"/><line x1="888.23" y1="660.2" x2="888.23" y2="666" stroke="#4b505b"/><line x1="967.90" y1="660.2" x2="967.90" y2="666" stroke="#4b505b"/><line x1="1047.57" y1="660.2" x2="1047.57" y2="666" stroke="#4b505b"/><line x1="1127.25" y1="660.2" x2="1127.25" y2="666" stroke="#4b505b"/><line x1="1206.92" y1="660.2" x2="1206.92" y2="666" stroke="#4b505b"/><line x1="1286.60" y1="660.2" x2="1286.60" y2="666" stroke="#4b505b"/><circle cx="934.6" cy="400" r="5" fill="#3b3f49"/><text x="945" y="405" font-size="14" fill="#e4e6ea" letter-spacing="0.3" font-family="Liberation Sans, sans-serif">Page views</text><circle cx="1048.75" cy="400" r="5" fill="#556581"/><text x="1059.2" y="405" font-size="14" fill="#e4e6ea" letter-spacing="0.3" font-family="Liberation Sans, sans-serif">Downloads</text><circle cx="1161" cy="400" r="5" fill="#c3c9da"/><text x="1171.7" y="405" font-size="14" fill="#e4e6ea" letter-spacing="0.3" font-family="Liberation Sans, sans-serif">Conversions</text><line x1="325" y1="827.3" x2="330.5" y2="827.3" stroke="#4b505b"/><text x="322.5" y="831.5999999999999" text-anchor="end" font-size="12" letter-spacing="0.4" fill="#c0c5d0" font-family="Liberation Sans, sans-serif">15,000</text><line x1="325" y1="904.3" x2="330.5" y2="904.3" stroke="#4b505b"/><text x="322.5" y="908.5999999999999" text-anchor="end" font-size="12" letter-spacing="0.4" fill="#c0c5d0" font-family="Liberation Sans, sans-serif">10,000</text><line x1="325" y1="980.5" x2="330.5" y2="980.5" stroke="#4b505b"/><text x="322.5" y="984.8" text-anchor="end" font-size="12" letter-spacing="0.4" fill="#c0c5d0" font-family="Liberation Sans, sans-serif">5,000</text><line x1="325" y1="1057.2" x2="330.5" y2="1057.2" stroke="#4b505b"/><text x="322.5" y="1061.5" text-anchor="end" font-size="12" letter-spacing="0.4" fill="#c0c5d0" font-family="Liberation Sans, sans-serif">0</text><defs><clipPath id="clipS"><rect x="0" y="0" width="1287" height="1092"/></clipPath><linearGradient id="ga" gradientUnits="userSpaceOnUse" x1="0" y1="854" x2="0" y2="960"><stop offset="0" stop-color="#272b37"/><stop offset="1" stop-color="#080b12"/></linearGradient><linearGradient id="gb" gradientUnits="userSpaceOnUse" x1="0" y1="952" x2="0" y2="1025"><stop offset="0" stop-color="#252a37"/><stop offset="1" stop-color="#090c13"/></linearGradient><linearGradient id="gc" gradientUnits="userSpaceOnUse" x1="0" y1="1019" x2="0" y2="1057"><stop offset="0" stop-color="#24272f"/><stop offset="1" stop-color="#10131a"/></linearGradient></defs><polygon points="330.50,858.50 363.47,865.70 396.44,861.30 429.41,861.50 462.38,862.10 495.34,858.10 528.31,853.90 561.28,864.80 594.25,864.80 627.22,857.50 660.19,859.60 693.16,861.90 726.13,858.50 759.10,866.10 792.07,861.00 825.03,862.30 858.00,862.10 890.97,860.60 923.94,867.80 956.91,867.00 989.88,861.90 1022.85,859.00 1055.82,857.10 1088.79,866.10 1121.76,863.20 1154.72,861.90 1187.69,859.10 1220.66,863.80 1253.63,860.30 1286.60,863.10 1286.60,956.50 1253.63,959.50 1220.66,957.00 1187.69,955.10 1154.72,961.50 1121.76,958.10 1088.79,958.50 1055.82,956.60 1022.85,954.30 989.88,959.40 956.91,960.00 923.94,960.60 890.97,958.10 858.00,960.60 825.03,957.70 792.07,952.80 759.10,960.00 726.13,955.60 693.16,953.70 660.19,954.30 627.22,956.40 594.25,960.00 561.28,957.10 528.31,951.60 495.34,955.60 462.38,956.60 429.41,958.10 396.44,960.00 363.47,958.50 330.50,953.90" fill="url(#ga)"/><polygon points="330.50,953.90 363.47,958.50 396.44,960.00 429.41,958.10 462.38,956.60 495.34,955.60 528.31,951.60 561.28,957.10 594.25,960.00 627.22,956.40 660.19,954.30 693.16,953.70 726.13,955.60 759.10,960.00 792.07,952.80 825.03,957.70 858.00,960.60 890.97,958.10 923.94,960.60 956.91,960.00 989.88,959.40 1022.85,954.30 1055.82,956.60 1088.79,958.50 1121.76,958.10 1154.72,961.50 1187.69,955.10 1220.66,957.00 1253.63,959.50 1286.60,956.50 1286.60,1022.30 1253.63,1021.40 1220.66,1024.20 1187.69,1022.60 1154.72,1024.70 1121.76,1023.80 1088.79,1025.70 1055.82,1019.60 1022.85,1022.90 989.88,1024.40 956.91,1021.30 923.94,1024.70 890.97,1026.30 858.00,1026.30 825.03,1021.90 792.07,1021.30 759.10,1026.30 726.13,1020.60 693.16,1022.30 660.19,1018.70 627.22,1018.50 594.25,1021.00 561.28,1025.70 528.31,1019.00 495.34,1024.40 462.38,1024.40 429.41,1024.20 396.44,1021.30 363.47,1023.80 330.50,1022.50" fill="url(#gb)"/><polygon points="330.50,1022.50 363.47,1023.80 396.44,1021.30 429.41,1024.20 462.38,1024.40 495.34,1024.40 528.31,1019.00 561.28,1025.70 594.25,1021.00 627.22,1018.50 660.19,1018.70 693.16,1022.30 726.13,1020.60 759.10,1026.30 792.07,1021.30 825.03,1021.90 858.00,1026.30 890.97,1026.30 923.94,1024.70 956.91,1021.30 989.88,1024.40 1022.85,1022.90 1055.82,1019.60 1088.79,1025.70 1121.76,1023.80 1154.72,1024.70 1187.69,1022.60 1220.66,1024.20 1253.63,1021.40 1286.60,1022.30 1286.6,1057.2 330.5,1057.2" fill="url(#gc)"/><line x1="330.5" y1="827.3" x2="1286.6" y2="827.3" stroke="#3b3f49" stroke-dasharray="4 2"/><line x1="330.5" y1="904.3" x2="1286.6" y2="904.3" stroke="#3b3f49" stroke-dasharray="4 2"/><line x1="330.5" y1="980.5" x2="1286.6" y2="980.5" stroke="#3b3f49" stroke-dasharray="4 2"/><polyline points="330.50,1022.50 363.47,1023.80 396.44,1021.30 429.41,1024.20 462.38,1024.40 495.34,1024.40 528.31,1019.00 561.28,1025.70 594.25,1021.00 627.22,1018.50 660.19,1018.70 693.16,1022.30 726.13,1020.60 759.10,1026.30 792.07,1021.30 825.03,1021.90 858.00,1026.30 890.97,1026.30 923.94,1024.70 956.91,1021.30 989.88,1024.40 1022.85,1022.90 1055.82,1019.60 1088.79,1025.70 1121.76,1023.80 1154.72,1024.70 1187.69,1022.60 1220.66,1024.20 1253.63,1021.40 1286.60,1022.30" fill="none" stroke="#3b3f49" stroke-width="2" stroke-linejoin="round"/><polyline points="330.50,953.90 363.47,958.50 396.44,960.00 429.41,958.10 462.38,956.60 495.34,955.60 528.31,951.60 561.28,957.10 594.25,960.00 627.22,956.40 660.19,954.30 693.16,953.70 726.13,955.60 759.10,960.00 792.07,952.80 825.03,957.70 858.00,960.60 890.97,958.10 923.94,960.60 956.91,960.00 989.88,959.40 1022.85,954.30 1055.82,956.60 1088.79,958.50 1121.76,958.10 1154.72,961.50 1187.69,955.10 1220.66,957.00 1253.63,959.50 1286.60,956.50" fill="none" stroke="#556581" stroke-width="2" stroke-linejoin="round"/><polyline points="330.50,858.50 363.47,865.70 396.44,861.30 429.41,861.50 462.38,862.10 495.34,858.10 528.31,853.90 561.28,864.80 594.25,864.80 627.22,857.50 660.19,859.60 693.16,861.90 726.13,858.50 759.10,866.10 792.07,861.00 825.03,862.30 858.00,862.10 890.97,860.60 923.94,867.80 956.91,867.00 989.88,861.90 1022.85,859.00 1055.82,857.10 1088.79,866.10 1121.76,863.20 1154.72,861.90 1187.69,859.10 1220.66,863.80 1253.63,860.30 1286.60,863.10" fill="none" stroke="#8f9cb8" stroke-width="2" stroke-linejoin="round"/><line x1="330.5" y1="827.3" x2="330.5" y2="1057.2" stroke="#4b505b"/><line x1="330.5" y1="1057.2" x2="1286.6" y2="1057.2" stroke="#4b505b"/><line x1="462.38" y1="1057.2" x2="462.38" y2="1063" stroke="#4b505b"/><text clip-path="url(#clipS)" x="462.38" y="1076" text-anchor="middle" font-size="12" letter-spacing="0.3" fill="#c3c8d5" font-family="Liberation Sans, sans-serif">Apr 5</text><line x1="627.22" y1="1057.2" x2="627.22" y2="1063" stroke="#4b505b"/><text clip-path="url(#clipS)" x="627.22" y="1076" text-anchor="middle" font-size="12" letter-spacing="0.3" fill="#c3c8d5" font-family="Liberation Sans, sans-serif">Apr 10</text><line x1="792.07" y1="1057.2" x2="792.07" y2="1063" stroke="#4b505b"/><text clip-path="url(#clipS)" x="792.07" y="1076" text-anchor="middle" font-size="12" letter-spacing="0.3" fill="#c3c8d5" font-family="Liberation Sans, sans-serif">Apr 15</text><line x1="956.91" y1="1057.2" x2="956.91" y2="1063" stroke="#4b505b"/><text clip-path="url(#clipS)" x="956.91" y="1076" text-anchor="middle" font-size="12" letter-spacing="0.3" fill="#c3c8d5" font-family="Liberation Sans, sans-serif">Apr 20</text><line x1="1121.76" y1="1057.2" x2="1121.76" y2="1063" stroke="#4b505b"/><text clip-path="url(#clipS)" x="1121.76" y="1076" text-anchor="middle" font-size="12" letter-spacing="0.3" fill="#c3c8d5" font-family="Liberation Sans, sans-serif">Apr 25</text><line x1="1286.60" y1="1057.2" x2="1286.60" y2="1063" stroke="#4b505b"/><text clip-path="url(#clipS)" x="1286.60" y="1076" text-anchor="middle" font-size="12" letter-spacing="0.3" fill="#c3c8d5" font-family="Liberation Sans, sans-serif">Apr 30</text><circle cx="1022.5" cy="797" r="5" fill="#8f9cb8"/><text x="1033" y="802" font-size="14" fill="#e4e6ea" letter-spacing="0.3" font-family="Liberation Sans, sans-serif">Organic</text><circle cx="1113" cy="797" r="5" fill="#556581"/><text x="1122.9" y="802" font-size="14" fill="#e4e6ea" letter-spacing="0.3" font-family="Liberation Sans, sans-serif">Referral</text><circle cx="1203.4" cy="797" r="5" fill="#3b3f49"/><text x="1213.9" y="802" font-size="14" fill="#e4e6ea" letter-spacing="0.3" font-family="Liberation Sans, sans-serif">Direct</text><path d="M1488.00,764.00 A100,100 0 0 1 1488.00,964.00 L1488.00,939.00 A75,75 0 0 0 1488.00,789.00 Z" fill="#919eba"/><path d="M1488.00,964.00 A100,100 0 0 1 1407.10,805.22 L1427.32,819.92 A75,75 0 0 0 1488.00,939.00 Z" fill="#576992"/><path d="M1407.10,805.22 A100,100 0 0 1 1457.10,768.89 L1464.82,792.67 A75,75 0 0 0 1427.32,819.92 Z" fill="#394360"/><path d="M1457.10,768.89 A100,100 0 0 1 1488.00,764.00 L1488.00,789.00 A75,75 0 0 0 1464.82,792.67 Z" fill="#262d40"/><line x1="1488.00" y1="789.00" x2="1488.00" y2="764.00" stroke="#05070c" stroke-width="1.2"/><line x1="1488.00" y1="939.00" x2="1488.00" y2="964.00" stroke="#05070c" stroke-width="1.2"/><line x1="1427.32" y1="819.92" x2="1407.10" y2="805.22" stroke="#05070c" stroke-width="1.2"/><line x1="1464.82" y1="792.67" x2="1457.10" y2="768.89" stroke="#05070c" stroke-width="1.2"/><text x="1488.45" y="861" text-anchor="middle" font-size="19" font-weight="bold" letter-spacing="0.9" fill="#9ea7b9" font-family="Liberation Sans, sans-serif">98.5K</text><text x="1488" y="883" text-anchor="middle" font-size="14" fill="#9ea7b9" letter-spacing="0.3" font-family="Liberation Sans, sans-serif">Total</text></svg>
</div>
</body></html>
